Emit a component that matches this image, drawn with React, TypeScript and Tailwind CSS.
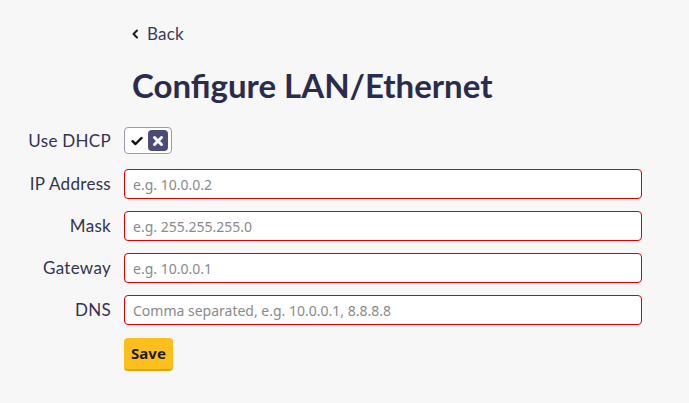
import React from "react";

export default function App() {
  const fields = [
    { label: "IP Address", ph: "e.g. 10.0.0.2" },
    { label: "Mask", ph: "e.g. 255.255.255.0" },
    { label: "Gateway", ph: "e.g. 10.0.0.1" },
    { label: "DNS", ph: "Comma separated, e.g. 10.0.0.1, 8.8.8.8" },
  ];
  return (
    <div
      className="w-[689px] h-[403px] bg-[#f7f7f7] text-[#33334f] overflow-hidden"
      style={{ fontFamily: "Lato, 'Noto Sans', sans-serif" }}
    >
      <div className="pl-[131px] pt-[24px] flex items-center gap-[8px] h-[20px] box-content">
        <svg width="8" height="10" viewBox="0 0 8 10" className="mt-[-1px]">
          <path d="M6 1.5 L2.5 5 L6 8.5" fill="none" stroke="#1a1a1a" strokeWidth="2" strokeLinecap="round" strokeLinejoin="round" />
        </svg>
        <span className="text-[17px] leading-[20px] tracking-[0.2px] text-[#3a3a5a]">Back</span>
      </div>
      <h1 className="pl-[132px] mt-[19px] text-[33px] leading-[44px] font-bold text-[#2b2b4d]">
        Configure LAN/Ethernet
      </h1>
      <div className="mt-[20px] grid grid-cols-[111px_518px] gap-x-[13px] gap-y-[12px] items-center text-[17px] tracking-[0.3px]">
        <div className="text-right mb-[3px]">Use DHCP</div>
        <div className="mb-[3px]">
          <div className="w-[48px] h-[27px] border border-[#9a9ab5] rounded-[4px] bg-white flex items-center justify-between pl-[6px] pr-[3px]">
            <svg width="12" height="10" viewBox="0 0 12 10">
              <path d="M1.5 5.2 L4.5 8 L10.5 2" fill="none" stroke="#111" strokeWidth="2.4" strokeLinecap="round" strokeLinejoin="round" />
            </svg>
            <div className="w-[20px] h-[21px] rounded-[4px] bg-[#4b4b78] flex items-center justify-center">
              <svg width="12" height="12" viewBox="0 0 12 12">
                <path d="M2.5 2.5 L9.5 9.5 M9.5 2.5 L2.5 9.5" stroke="#fff" strokeWidth="3" strokeLinecap="round" />
              </svg>
            </div>
          </div>
        </div>
        {fields.map((f) => (
          <React.Fragment key={f.label}>
            <div className="text-right">{f.label}</div>
            <input
              className="h-[30px] w-[518px] rounded-[4px] border border-[#e00000] bg-white px-[8px] text-[14px] tracking-normal outline-none placeholder:text-[#8a8a8a]"
              style={{ fontFamily: "'Noto Sans', sans-serif" }}
              placeholder={f.ph}
            />
          </React.Fragment>
        ))}
        <div />
        <div className="mt-[1px]">
          <button
            className="w-[49px] h-[33px] rounded-[4px] bg-[#fdbf1c] border-b-2 border-[#dca316] text-[15px] tracking-normal font-bold text-[#1a1a2a]"
            style={{ fontFamily: "'Noto Sans', sans-serif" }}
          >
            Save
          </button>
        </div>
      </div>
    </div>
  );
}
